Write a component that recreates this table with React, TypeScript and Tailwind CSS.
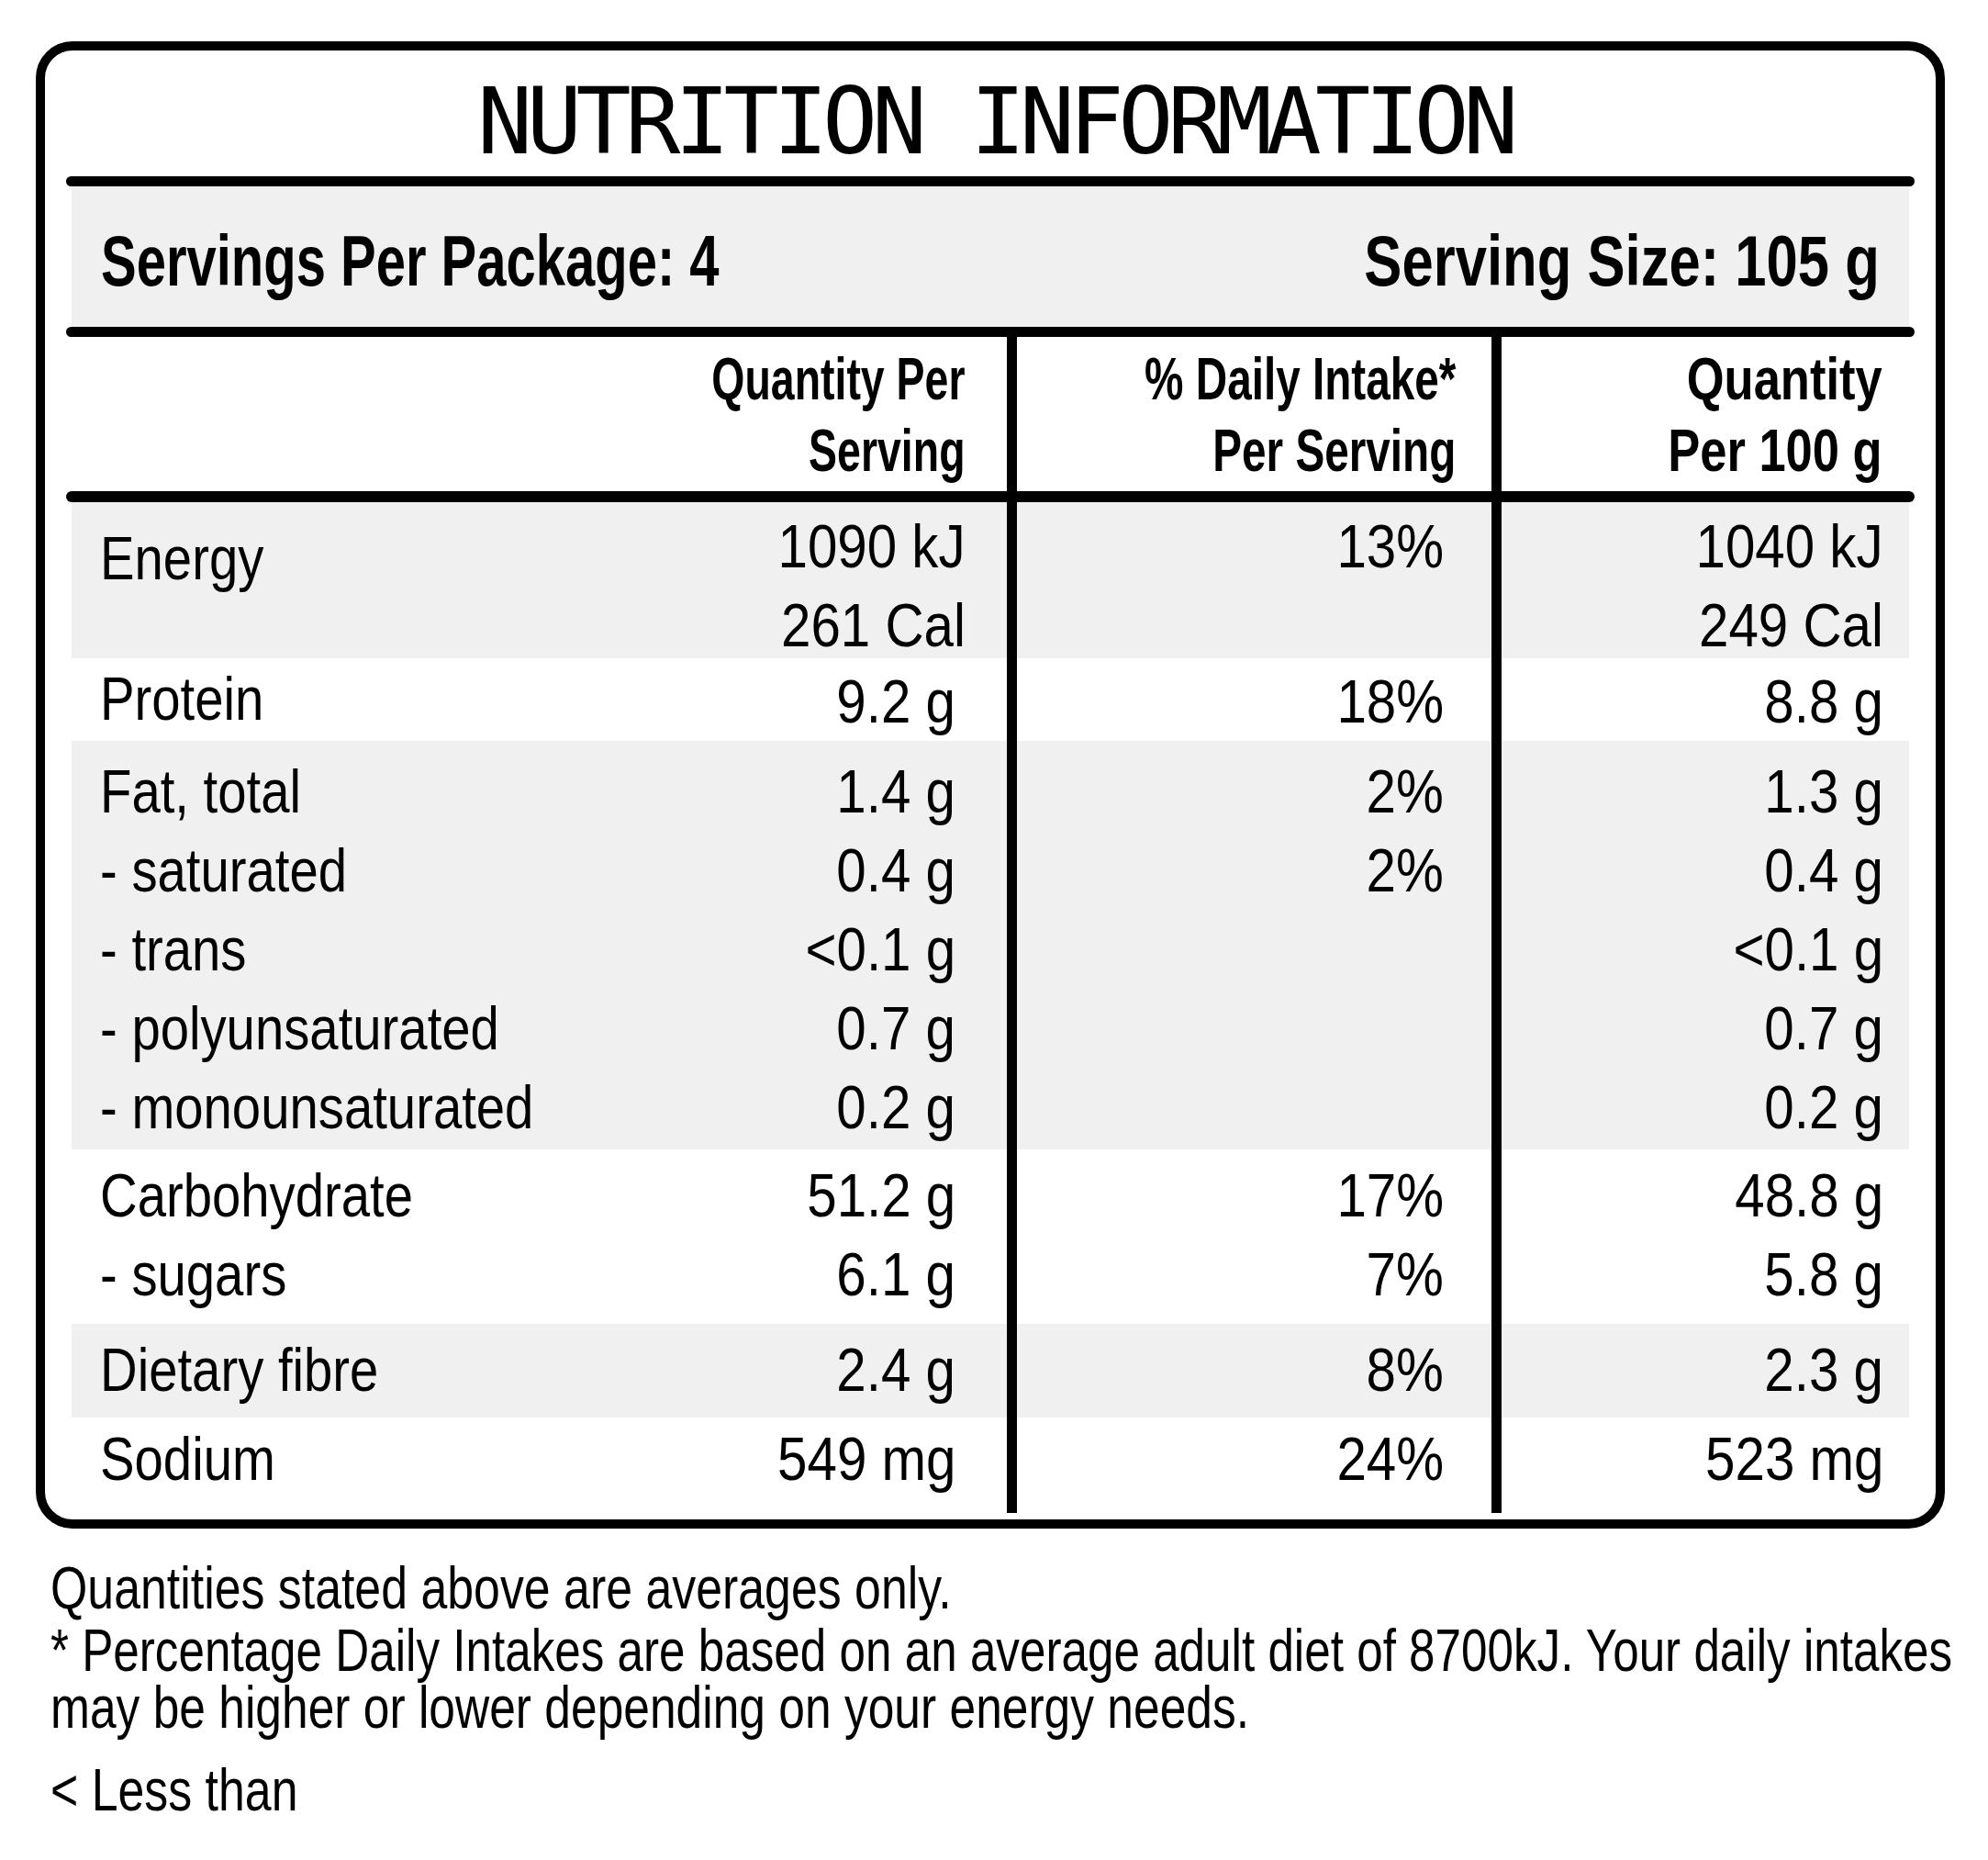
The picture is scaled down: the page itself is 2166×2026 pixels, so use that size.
import React from "react";

type Line = [string, string, string, string];

const groups: {
  bg: string;
  h: string;
  lpt: string;
  vpt: string;
  lines: Line[];
}[] = [
  {
    bg: "bg-[#f0f0f0]",
    h: "h-[170px]",
    lpt: "pt-[18px]",
    vpt: "pt-[5px]",
    lines: [
      ["Energy", "1090 kJ", "13%", "1040 kJ"],
      ["", "261 Cal", "", "249 Cal"],
    ],
  },
  {
    bg: "bg-white",
    h: "h-[90px]",
    lpt: "pt-[1px]",
    vpt: "pt-[4px]",
    lines: [["Protein", "9.2 g", "18%", "8.8 g"]],
  },
  {
    bg: "bg-[#f0f0f0]",
    h: "h-[445px]",
    lpt: "pt-[12px]",
    vpt: "pt-[12px]",
    lines: [
      ["Fat, total", "1.4 g", "2%", "1.3 g"],
      ["- saturated", "0.4 g", "2%", "0.4 g"],
      ["- trans", "<0.1 g", "", "<0.1 g"],
      ["- polyunsaturated", "0.7 g", "", "0.7 g"],
      ["- monounsaturated", "0.2 g", "", "0.2 g"],
    ],
  },
  {
    bg: "bg-white",
    h: "h-[190px]",
    lpt: "pt-[7px]",
    vpt: "pt-[7px]",
    lines: [
      ["Carbohydrate", "51.2 g", "17%", "48.8 g"],
      ["- sugars", "6.1 g", "7%", "5.8 g"],
    ],
  },
  {
    bg: "bg-[#f0f0f0]",
    h: "h-[102px]",
    lpt: "pt-[7px]",
    vpt: "pt-[7px]",
    lines: [["Dietary fibre", "2.4 g", "8%", "2.3 g"]],
  },
  {
    bg: "bg-white",
    h: "h-[104px]",
    lpt: "pt-[2px]",
    vpt: "pt-[2px]",
    lines: [["Sodium", "549 mg", "24%", "523 mg"]],
  },
];

// no narrow face installed, so the condensed look comes from a horizontal squeeze
const sans = "font-['Liberation_Sans','Arial',sans-serif]";

function Rule() {
  return <div className="-mx-[6px] h-[11px] rounded-full bg-black" />;
}

function Cell({ text, left, className }: { text: string; left?: boolean; className?: string }) {
  return (
    <div className={`h-[86px] leading-[86px] whitespace-nowrap ${className ?? ""}`}>
      <span className={`inline-block ${left ? "origin-left scale-x-[0.84]" : "origin-right scale-x-[0.87]"}`}>
        {text || "\u00a0"}
      </span>
    </div>
  );
}

export default function App() {
  return (
    <div className={`min-h-screen overflow-hidden bg-white pt-[45px] pl-[39px] text-black ${sans}`}>
      <div className="w-[2080px] rounded-[40px] border-[10px] border-black px-[29px] pb-[7px]">
        <div className="pt-[28px] pl-[10px] text-center font-['DejaVu_Sans_Mono',monospace] text-[100px] leading-[100px] tracking-[-6.5px]">
          NUTRITION INFORMATION
        </div>

        <div className="mt-[9px]">
          <Rule />
        </div>

        <div className="flex h-[153px] items-center justify-between bg-[#f0f0f0] pt-[8px] pl-[32px] pr-[32px] text-[77px] font-bold leading-[86px] whitespace-nowrap">
          <span className="inline-block origin-left scale-x-[0.753]">Servings Per Package: 4</span>
          <span className="inline-block origin-right scale-x-[0.8]">Serving Size: 105 g</span>
        </div>

        <Rule />

        <div className="grid h-[168px] grid-cols-[520px_499px_528px_457px] text-right text-[64px] font-bold leading-[78px] whitespace-nowrap">
          <div />
          <div className="pt-[7px] pr-[45px]">
            <span className="inline-block origin-right scale-x-[0.726]">
              Quantity Per
              <br />
              Serving
            </span>
          </div>
          <div className="border-l-[11px] border-black pt-[7px] pr-[39px]">
            <span className="inline-block origin-right scale-x-[0.745]">
              % Daily Intake*
              <br />
              Per Serving
            </span>
          </div>
          <div className="border-l-[11px] border-black pt-[7px] pr-[31px]">
            <span className="inline-block origin-right scale-x-[0.82]">
              Quantity
              <br />
              Per 100 g
            </span>
          </div>
        </div>

        <div className="-mx-[6px] h-[12px] rounded-full bg-black" />

        {groups.map((g, i) => (
          <div key={i} className={`grid grid-cols-[520px_499px_528px_457px] text-[67px] ${g.bg} ${g.h}`}>
            <div className={`pl-[31px] ${g.lpt}`}>
              {g.lines.map((l, j) => (
                <Cell key={j} text={l[0]} left />
              ))}
            </div>
            <div className={`text-right ${g.vpt}`}>
              {g.lines.map((l, j) => (
                <Cell key={j} text={l[1]} className={l[1].endsWith("g") ? "pr-[56px]" : "pr-[45px]"} />
              ))}
            </div>
            <div className={`border-l-[11px] border-black pr-[52px] text-right ${g.vpt}`}>
              {g.lines.map((l, j) => (
                <Cell key={j} text={l[2]} />
              ))}
            </div>
            <div className={`border-l-[11px] border-black pr-[30px] text-right ${g.vpt}`}>
              {g.lines.map((l, j) => (
                <Cell key={j} text={l[3]} />
              ))}
            </div>
          </div>
        ))}
      </div>

      <div className="mt-[34px] pl-[16px] text-[64px] leading-[62px] whitespace-nowrap">
        <p>
          <span className="inline-block origin-left scale-x-[0.81]">Quantities stated above are averages only.</span>
        </p>
        <p className="mt-[6px]">
          <span className="block origin-left scale-x-[0.8]">
            * Percentage Daily Intakes are based on an average adult diet of 8700kJ. Your daily intakes
          </span>
          <span className="block origin-left scale-x-[0.805]">may be higher or lower depending on your energy needs.</span>
        </p>
        <p className="mt-[28px]">
          <span className="inline-block origin-left scale-x-[0.81]">&lt; Less than</span>
        </p>
      </div>
    </div>
  );
}
